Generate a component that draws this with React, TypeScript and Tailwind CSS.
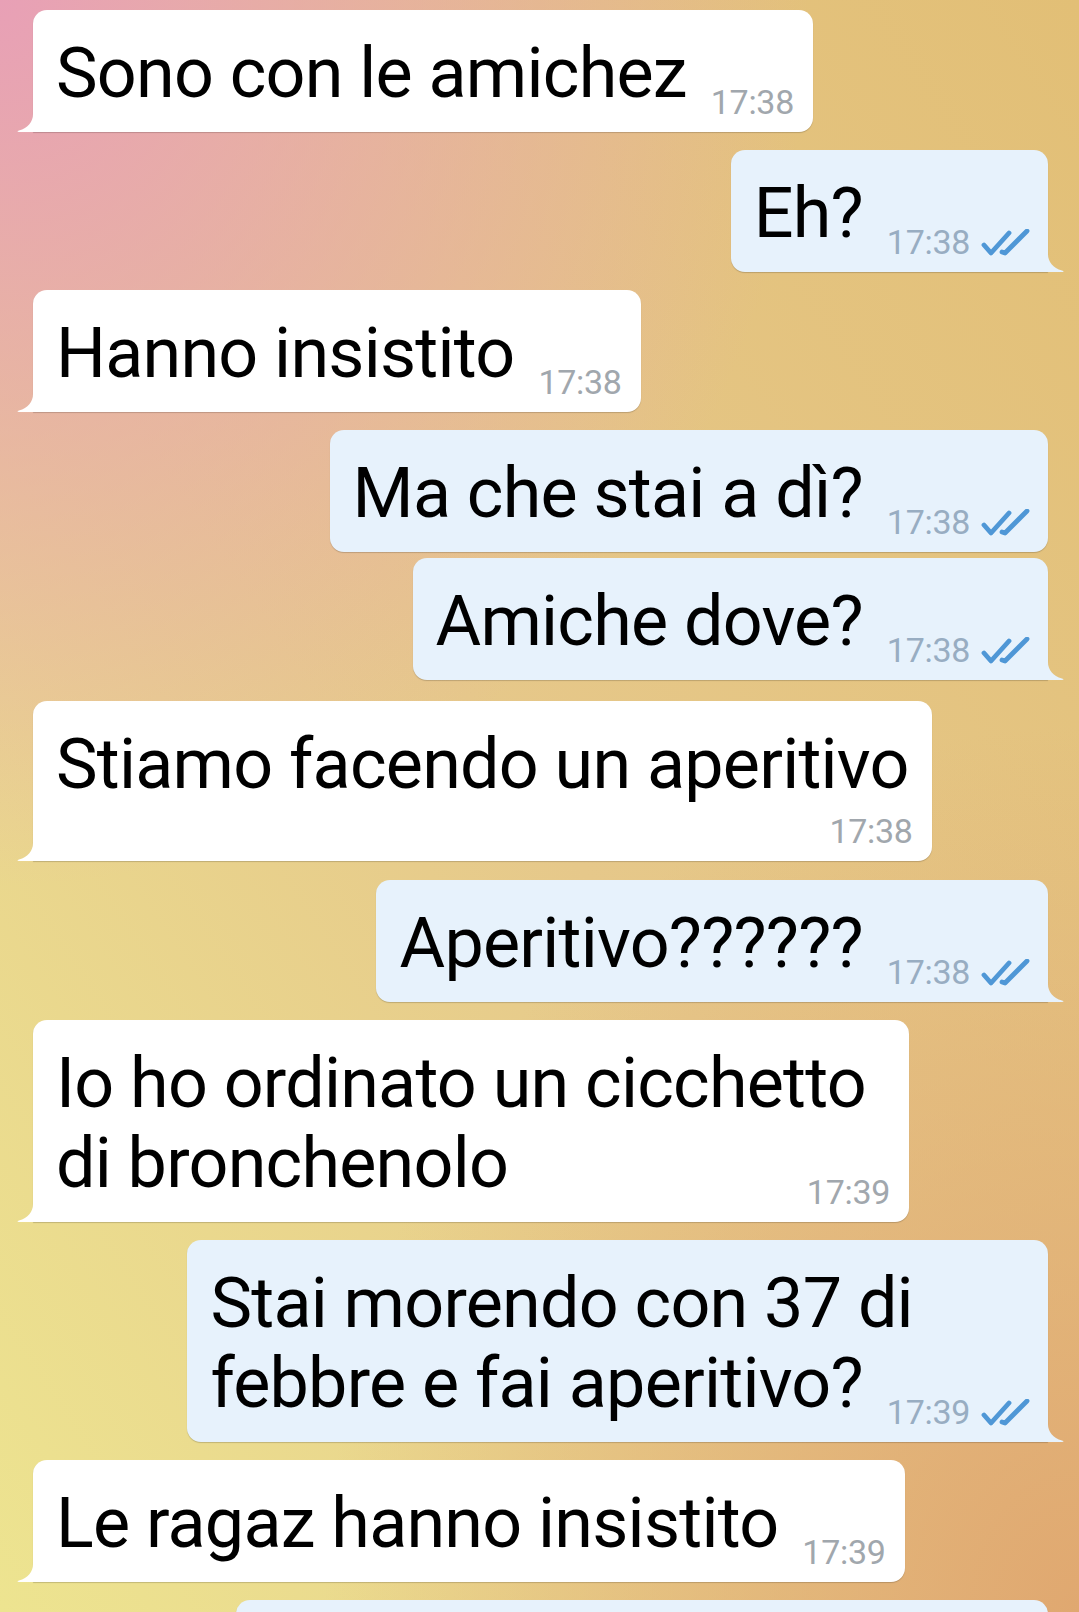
type Msg = {
  out: boolean;
  lines: string[];
  time?: string;
  gap: string;
  tail?: boolean;
  timeBelow?: boolean;
  extra?: string;
};

const messages: Msg[] = [
  { out: false, lines: ["Sono con le amichez"], time: "17:38", gap: "mt-[10px]" },
  { out: true, lines: ["Eh?"], time: "17:38", gap: "mt-[18px]" },
  { out: false, lines: ["Hanno insistito"], time: "17:38", gap: "mt-[18px]" },
  { out: true, lines: ["Ma che stai a dì?"], time: "17:38", gap: "mt-[18px]", tail: false },
  { out: true, lines: ["Amiche dove?"], time: "17:38", gap: "mt-[6px]" },
  { out: false, lines: ["Stiamo facendo un aperitivo"], time: "17:38", gap: "mt-[21px]", timeBelow: true },
  { out: true, lines: ["Aperitivo??????"], time: "17:38", gap: "mt-[19px]" },
  { out: false, lines: ["Io ho ordinato un cicchetto", "di bronchenolo"], time: "17:39", gap: "mt-[18px]", extra: "min-w-[876px]" },
  { out: true, lines: ["Stai morendo con 37 di", "febbre e fai aperitivo?"], time: "17:39", gap: "mt-[18px]" },
  { out: false, lines: ["Le ragaz hanno insistito"], time: "17:39", gap: "mt-[18px]" },
];

// double tick shown on sent messages
const Ticks = () => (
  <svg width="49" height="27" viewBox="0 0 49 27" className="mb-[3px] ml-[11px] shrink-0">
    <path d="M3 16 L10 24 L28 4" fill="none" stroke="#4f97d6" strokeWidth="4.8" strokeLinecap="round" strokeLinejoin="round" />
    <path d="M21 23 L24 24 L46 2" fill="none" stroke="#4f97d6" strokeWidth="4.8" strokeLinecap="round" strokeLinejoin="round" />
  </svg>
);

const Tail = ({ out }: { out: boolean }) =>
  out ? (
    <svg width="20" height="20" viewBox="0 0 20 20" className="absolute -right-[16px] bottom-0">
      <path d="M4 0 L4 2 C4 10 9 16 18 18.5 C20 19 20 20 18 20 L0 20 L0 0 Z" fill="#e7f2fc" />
    </svg>
  ) : (
    <svg width="20" height="20" viewBox="0 0 20 20" className="absolute -left-[16px] bottom-0">
      <path d="M16 0 L16 2 C16 10 11 16 2 18.5 C0 19 0 20 2 20 L20 20 L20 0 Z" fill="#ffffff" />
    </svg>
  );

const Stamp = ({ m }: { m: Msg }) => (
  <div className="flex items-end shrink-0">
    <span className={`text-[34px] leading-[34px] tracking-[-0.3px] ${m.out ? "text-[#98adc2]" : "text-[#a1a7ad]"}`}>{m.time}</span>
    {m.out && <Ticks />}
  </div>
);

const Bubble = ({ m }: { m: Msg }) => {
  const hasTail = m.tail !== false;
  const last = m.lines[m.lines.length - 1];
  const first = m.lines.slice(0, -1);
  return (
    <div className={`flex ${m.out ? "justify-end pr-[31px]" : "justify-start pl-[33px]"} ${m.gap}`}>
      <div
        className={`relative pt-[23px] pl-[23px] pb-[13px] ${m.out ? "pr-[18px] bg-[#e7f2fc]" : "pr-[19px] bg-white"} rounded-[14px] shadow-[0_1px_1px_rgba(0,0,0,0.18)] ${
          hasTail ? (m.out ? "rounded-br-none" : "rounded-bl-none") : ""
        } ${m.extra ?? ""}`}
      >
        {first.map((l) => (
          <div key={l} className="text-[70px] leading-[80px] tracking-[-0.75px] text-black whitespace-nowrap">
            {l}
          </div>
        ))}
        {m.timeBelow ? (
          <>
            <div className="text-[70px] leading-[80px] tracking-[-0.75px] text-black whitespace-nowrap pr-[4px]">{last}</div>
            <div className="flex justify-end mt-[10px]">
              <Stamp m={m} />
            </div>
          </>
        ) : (
          <div className="flex items-end justify-between">
            <div className="text-[70px] leading-[80px] tracking-[-0.75px] text-black whitespace-nowrap mb-[6px]">{last}</div>
            <div className="ml-[24px]">
              <Stamp m={m} />
            </div>
          </div>
        )}
        {hasTail && <Tail out={m.out} />}
      </div>
    </div>
  );
};

export default function App() {
  return (
    <div className="w-[1079px] h-[1612px] overflow-hidden font-['Roboto',_'Noto_Sans',_sans-serif] bg-[radial-gradient(ellipse_75%_55%_at_0%_0%,rgba(232,160,182,1),rgba(232,160,182,0)),radial-gradient(ellipse_70%_55%_at_100%_100%,rgba(224,168,112,1),rgba(224,168,112,0)),linear-gradient(to_bottom_left,#e2bf76,#e6c88a_50%,#ede490)]">
      {messages.map((m, i) => (
        <Bubble key={i} m={m} />
      ))}
      <div className="flex justify-end pr-[31px] mt-[18px]">
        <div className="w-[812px] h-[122px] rounded-[14px] bg-[#e7f2fc] shadow-[0_1px_1px_rgba(0,0,0,0.18)]" />
      </div>
    </div>
  );
}
